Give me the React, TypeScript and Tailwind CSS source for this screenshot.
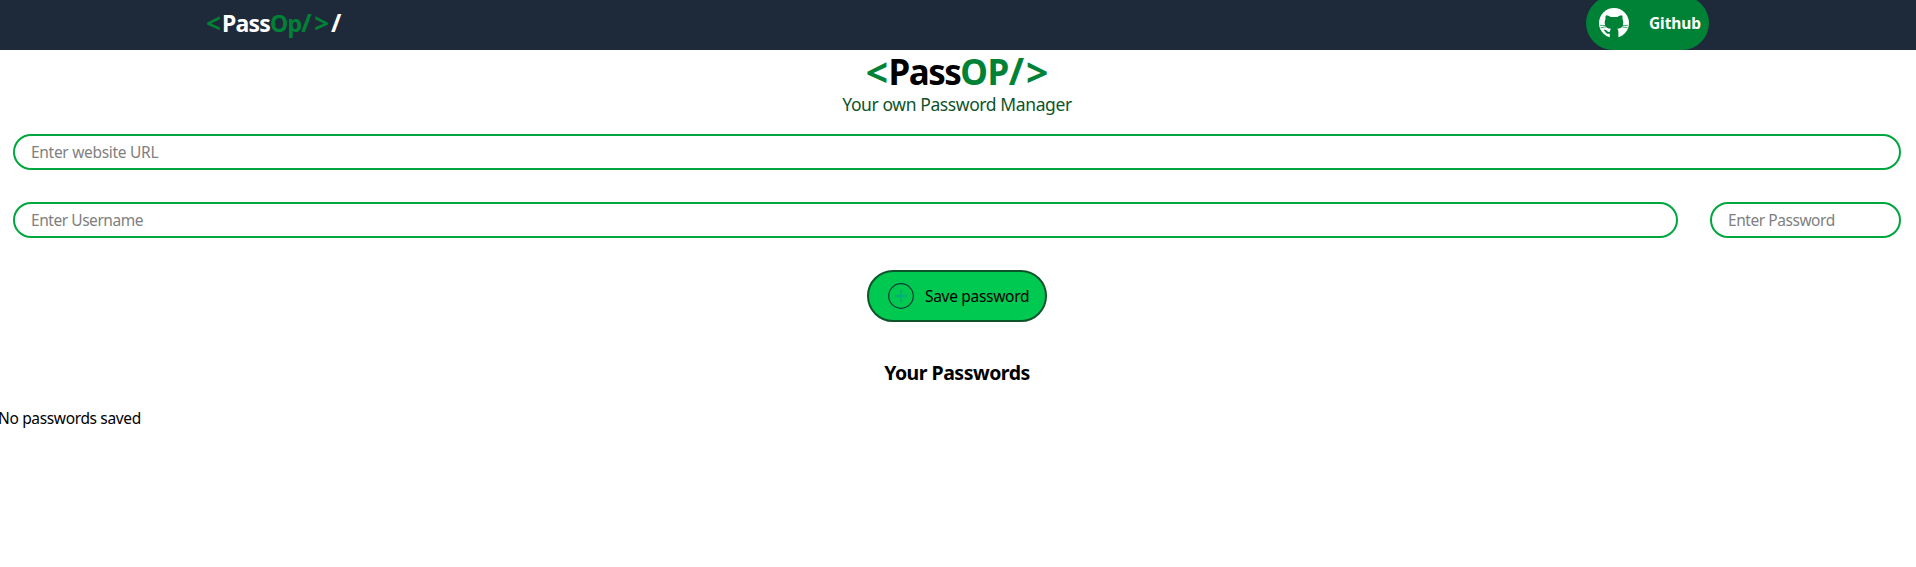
import React from "react";

const field =
  "h-9 rounded-full border-2 border-[#00a63e] bg-white px-4 text-[15.5px] leading-6 text-black outline-none placeholder:text-[#808080]";

function GithubMark() {
  return (
    <svg viewBox="0 0 30 30" className="size-[30px] shrink-0" aria-hidden="true">
      <circle cx="15" cy="15" r="15" fill="#fff" />
      <path
        fill="#008236"
        d="M7 7.2C8.8 7.2 10.2 8 11.6 9h6.8c1.4-1 2.8-1.8 4.6-1.8.7 1.4.7 2.6.4 3.8 1 1.4 1.2 4.2.4 6.4-.9 2.3-3 3.1-5.6 3.4.9.9 1.2 2 1.2 3.4V30h-8.6v-4.3c-2.6.5-3.8-.4-4.6-1.9-.4-.8-.9-1.4-1.9-1.9 2.3-.7 3.3.5 4 1.4.6.7 1.4.8 2.5.4.1-1.2.5-2.2 1.2-2.9-2.7-.3-4.9-1.1-5.8-3.4-.8-2.2-.6-5 .4-6.4-.3-1.2-.3-2.4.4-3.8z"
      />
      <path d="M1 17.3l6 .3M1.5 19.8l5.7-1M29 17.3l-6 .3M28.5 19.8l-5.7-1" stroke="#008236" strokeWidth=".7" fill="none" />
    </svg>
  );
}

function AddIcon() {
  return (
    <svg viewBox="0 0 26 26" className="size-[26px] shrink-0" fill="none" aria-hidden="true">
      <circle cx="13" cy="13" r="12.3" stroke="#123a35" strokeWidth="1.2" />
      <path d="M13 7v12M7 13h12" stroke="#08a880" strokeWidth="1.6" />
    </svg>
  );
}

export default function App() {
  return (
    <div className="min-h-[567px] overflow-hidden bg-white font-['Noto_Sans','Open_Sans',sans-serif] text-black">
      <nav className="flex h-[50px] items-start justify-between overflow-hidden bg-[#1e2939] pr-[207px] pl-[206px] text-white">
        <div className="pt-[7px] text-[23px] leading-8 font-bold tracking-[-0.8px] whitespace-nowrap">
          <span className="align-[-1px] text-[26px] leading-[0] tracking-[1.2px] text-[#008236]">&lt;</span>
          <span>Pass</span>
          <span className="text-[#008236]">
            <span>Op</span>
            <span className="text-[25px] leading-[0] tracking-[2.6px]">/</span>
            <span className="align-[-1px] text-[26px] leading-[0] tracking-[2px]">&gt;</span>
          </span>
          <span className="text-[25px] leading-[0]">/</span>
        </div>
        <button className="-mt-1 flex h-[54px] w-[123px] shrink-0 items-center rounded-full bg-[#008236] pl-[13px]">
          <GithubMark />
          <span className="ml-5 -mt-px text-[15.5px] leading-6 font-bold tracking-[-0.1px]">Github</span>
        </button>
      </nav>

      <main className="pr-0.5">
        <h1 className="pt-[2px] text-center text-[35px] leading-10 font-bold whitespace-nowrap">
          <span className="align-[-2px] text-[39px] leading-[0] tracking-[0.5px] text-[#008236]">&lt;</span>
          <span className="tracking-[-1.5px]">Pass</span>
          <span className="text-[#008236]">
            <span className="tracking-[-0.5px]">OP</span>
            <span className="text-[37px] leading-[0] tracking-[2px]">/</span>
            <span className="align-[-2px] text-[39px] leading-[0]">&gt;</span>
          </span>
        </h1>
        <p className="-mt-0.5 text-center text-[17.5px] leading-7 tracking-[-0.4px] text-[#0d542b]">Your own Password Manager</p>

        <form className="mt-4 flex flex-col items-center gap-8 px-[13px]" onSubmit={(e) => e.preventDefault()}>
          <input className={`${field} w-full tracking-[-0.3px]`} placeholder="Enter website URL" />
          <div className="flex w-full gap-8">
            <input className={`${field} min-w-0 flex-1 tracking-[-0.45px]`} placeholder="Enter Username" />
            <input className={`${field} w-[191px] tracking-[-0.45px]`} type="password" placeholder="Enter Password" />
          </div>
          <button className="flex h-[52px] w-[180px] items-center rounded-full border-2 border-[#0d542b] bg-[#00c951] pl-[19px]">
            <AddIcon />
            <span className="ml-[11px] text-[15.5px] leading-6 tracking-[-0.3px] whitespace-nowrap">Save password</span>
          </button>
        </form>

        <h2 className="mt-[37px] text-center text-[19.5px] leading-7 font-bold tracking-[-0.5px]">Your Passwords</h2>
        <div className="-ml-[2px] mt-[19px] text-[15.5px] leading-6 tracking-[-0.35px]">No passwords saved</div>
      </main>
    </div>
  );
}
